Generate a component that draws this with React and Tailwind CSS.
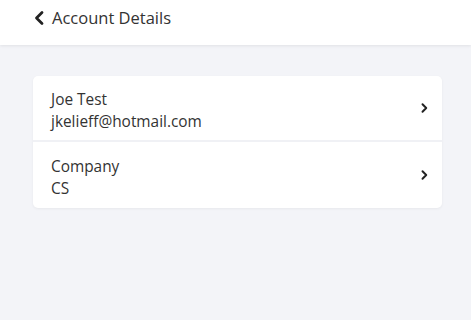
import React from "react";

const Chevron = ({ dir = "right", className = "", width = 2.6 }) => (
  <svg viewBox="0 0 10 16" className={className} fill="none" stroke="currentColor" strokeWidth={width} strokeLinecap="round" strokeLinejoin="round">
    {dir === "right" ? <path d="M3 3l5 5-5 5" /> : <path d="M7.5 2.5L2 8l5.5 5.5" />}
  </svg>
);

const Row = ({ title, value, last }) => (
  <div className={`flex items-center justify-between pl-[18px] pr-[14px] h-[66px] ${last ? "" : "border-b-2 border-[#f0f1f5]"}`}>
    <div className="leading-[22px] text-[15.4px] text-[#333] pt-[5px]">
      <div>{title}</div>
      <div>{value}</div>
    </div>
    <Chevron className="w-[8px] h-[12px] text-[#222]" />
  </div>
);

export default function App() {
  return (
    <div className="w-[471px] h-[320px] bg-[#f3f4f8] overflow-hidden" style={{ fontFamily: '"Open Sans", "Noto Sans", sans-serif' }}>
      <div className="h-[45px] bg-white shadow-[0_1px_3px_rgba(0,0,0,0.08)] flex items-start pt-[5px] pl-[34px] gap-[7px] text-[#333]">
        <Chevron dir="left" width={2.8} className="w-[11px] h-[16px] mt-[5px] text-[#222]" />
        <span className="text-[16.5px] leading-[25px]">Account Details</span>
      </div>
      <div className="px-[33px] pt-[31px]">
        <div className="w-[409px] bg-white rounded-[5px] shadow-[0_1px_3px_rgba(0,0,0,0.05)]">
          <Row title="Joe Test" value="jkelieff@hotmail.com" />
          <Row title="Company" value="CS" last />
        </div>
      </div>
    </div>
  );
}
